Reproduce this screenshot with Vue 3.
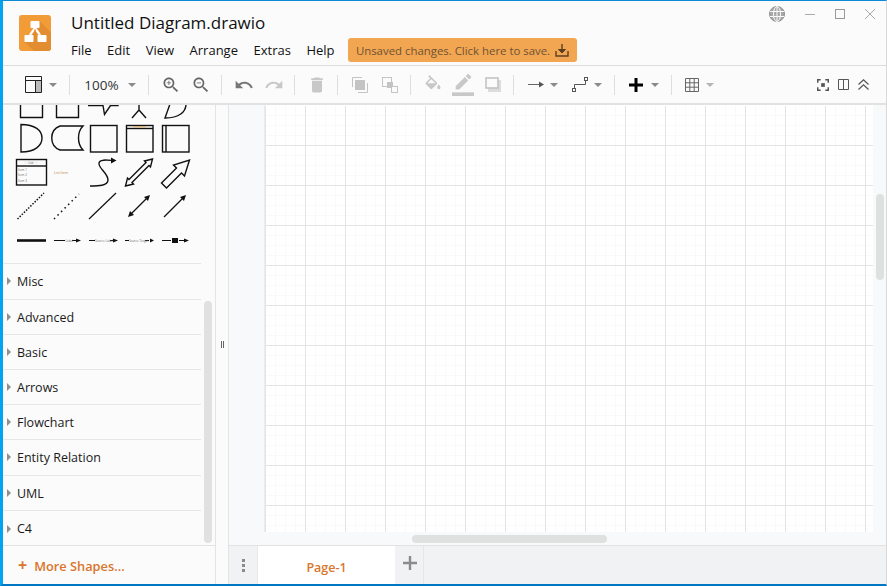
<template>
  <div class="window">
    <header class="head">
      <svg class="logo" width="32" height="36" viewBox="0 0 32 36">
        <rect width="32" height="36" rx="3" fill="#f29c38" />
        <path d="M20.500 6L32 17.500V33a3 3 0 0 1-3 3H15L5.500 27z" fill="#e28d2f" />
        <path d="M16 13l-5 7M16 13l5 7" fill="none" stroke="#fff" stroke-width="2.200" />
        <path d="M16 14.500v5.500" stroke="#e28d2f" stroke-width="1.500" />
        <rect x="11.500" y="6" width="9" height="7" rx=".8" fill="#fff" />
        <rect x="5.500" y="20" width="9" height="7" rx=".8" fill="#fff" />
        <rect x="18.500" y="20" width="9" height="7" rx=".8" fill="#fff" />
      </svg>
      <div class="head-main">
        <div class="title">Untitled Diagram.drawio</div>
        <nav class="menu">
          <span v-for="m in menus" :key="m" class="menu-item">{{ m }}</span>
          <button type="button" class="save">
            <span>Unsaved changes. Click here to save.</span>
            <svg width="14" height="14" viewBox="0 0 14 14" fill="none" stroke="#5b4020" stroke-width="1.400">
              <path d="M1 8v5h12V8M7 1v8" />
              <path d="M3.500 6.500L7 10l3.500-3.500z" fill="#5b4020" stroke-width="1" />
            </svg>
          </button>
        </nav>
      </div>
      <div class="win-controls">
        <svg class="globe" width="18" height="18" viewBox="0 0 18 18" fill="none" stroke="#8f8f8f">
          <circle cx="9" cy="9" r="7.500" fill="#a8a8a8" />
          <ellipse cx="9" cy="9" rx="3.500" ry="7.500" stroke="#fbfbfb" />
          <path d="M9 1.500v15M2 6.500h14M2 11.500h14" stroke="#fbfbfb" />
        </svg>
        <svg width="30" height="18" viewBox="0 0 30 18" stroke="#aaa" fill="none"><path d="M10 9.500h10" /></svg>
        <svg width="30" height="18" viewBox="0 0 30 18" stroke="#999" fill="none"><rect x="10.500" y="4.500" width="9" height="9" /></svg>
        <svg width="30" height="18" viewBox="0 0 30 18" stroke="#aaa" fill="none"><path d="M10 4l10 10M20 4L10 14" /></svg>
      </div>
    </header>

    <div class="toolbar">
      <button type="button" class="tb tb-layout">
        <svg width="18" height="17" viewBox="0 0 18 17">
          <rect x="10" y="4" width="7" height="12" fill="#bbb" />
          <path d="M.5.500h16v16H.5zM.5 4.500h16M10.500 4.500v12" fill="none" stroke="#222" />
        </svg>
        <i class="caret" />
      </button>
      <i class="sep" />
      <button type="button" class="tb tb-zoom"><span>100%</span><i class="caret" /></button>
      <i class="sep" />
      <button type="button" class="tb">
        <svg class="ic" viewBox="0 0 24 24" fill="#666">
          <path d="M15.500 14h-.79l-.28-.27C15.410 12.590 16 11.110 16 9.500 16 5.910 13.090 3 9.500 3S3 5.910 3 9.500 5.910 16 9.500 16c1.610 0 3.090-.59 4.230-1.570l.27.28v.79l5 4.990L20.490 19l-4.990-5zm-6 0C7.010 14 5 11.990 5 9.500S7.010 5 9.500 5 14 7.010 14 9.500 11.990 14 9.500 14z" />
          <path d="M12 10h-2v2H9v-2H7V9h2V7h1v2h2z" />
        </svg>
      </button>
      <button type="button" class="tb">
        <svg class="ic" viewBox="0 0 24 24" fill="#666">
          <path d="M15.500 14h-.79l-.28-.27C15.410 12.590 16 11.110 16 9.500 16 5.910 13.090 3 9.500 3S3 5.910 3 9.500 5.910 16 9.500 16c1.610 0 3.090-.59 4.230-1.570l.27.28v.79l5 4.990L20.490 19l-4.990-5zm-6 0C7.010 14 5 11.990 5 9.500S7.010 5 9.500 5 14 7.010 14 9.500 11.990 14 9.500 14z" />
          <path d="M7 9h5v1H7z" />
        </svg>
      </button>
      <i class="sep" />
      <button type="button" class="tb">
        <svg class="ic" viewBox="0 0 24 24" fill="#777"><path d="M12.500 8c-2.650 0-5.050.99-6.900 2.600L2 7v9h9l-3.620-3.620c1.390-1.160 3.160-1.880 5.120-1.880 3.540 0 6.550 2.310 7.600 5.500l2.370-.78C21.080 11.030 17.150 8 12.500 8z" /></svg>
      </button>
      <button type="button" class="tb">
        <svg class="ic" viewBox="0 0 24 24" fill="#c8c8c8"><path d="M18.400 10.600C16.550 8.990 14.150 8 11.500 8c-4.650 0-8.580 3.030-9.960 7.220L3.900 16c1.050-3.190 4.050-5.500 7.600-5.500 1.950 0 3.730.72 5.120 1.880L13 16h9V7z" /></svg>
      </button>
      <i class="sep" />
      <button type="button" class="tb">
        <svg class="ic" viewBox="0 0 24 24" fill="#c8c8c8"><path d="M6 19c0 1.100.9 2 2 2h8c1.100 0 2-.9 2-2V7H6zM19 4h-3.500l-1-1h-5l-1 1H5v2h14z" /></svg>
      </button>
      <i class="sep" />
      <button type="button" class="tb">
        <svg width="16" height="16" viewBox="0 0 16 16" fill="none" stroke="#c4c4c4">
          <path d="M.5 10V.500H10M15.500 6v9.500H6" />
          <rect x="3" y="3" width="10" height="10" fill="#c4c4c4" stroke="none" />
        </svg>
      </button>
      <button type="button" class="tb">
        <svg width="16" height="16" viewBox="0 0 16 16" fill="none" stroke="#c4c4c4">
          <rect x=".5" y=".5" width="9" height="9" />
          <rect x="5" y="5" width="6" height="6" fill="#c4c4c4" stroke="none" />
          <rect x="9.500" y="9.500" width="6" height="6" fill="#fbfbfb" />
        </svg>
      </button>
      <i class="sep" />
      <button type="button" class="tb">
        <svg class="ic" viewBox="0 0 24 24" fill="#c8c8c8"><path d="M16.560 8.940L7.620 0 6.210 1.410l2.380 2.380-5.150 5.150c-.59.590-.59 1.540 0 2.120l5.500 5.500c.29.290.68.440 1.060.44s.77-.15 1.060-.44l5.500-5.500c.59-.58.59-1.530 0-2.120zM5.210 10L10 5.210 14.790 10H5.210zM19 11.500s-2 2.170-2 3.500c0 1.100.9 2 2 2s2-.9 2-2c0-1.330-2-3.500-2-3.500z" /></svg>
      </button>
      <button type="button" class="tb">
        <svg width="22" height="22" viewBox="0 0 24 24" fill="#c8c8c8">
          <path d="M17.750 7L14 3.250l-10 10V17h3.750zm2.960-2.960c.39-.39.39-1.020 0-1.410L18.370.29c-.39-.39-1.020-.39-1.410 0L15 2.250 18.750 6z" />
          <rect y="20" width="24" height="4" />
        </svg>
      </button>
      <button type="button" class="tb">
        <svg width="16" height="16" viewBox="0 0 16 16" fill="none">
          <rect x="3" y="3" width="13" height="12" fill="#dcdcdc" />
          <rect x="1" y="1" width="12" height="10" fill="#fbfbfb" stroke="#c4c4c4" stroke-width="1.600" />
        </svg>
      </button>
      <i class="sep" />
      <button type="button" class="tb tb-drop">
        <svg width="17" height="9" viewBox="0 0 17 9"><path d="M0 4.500h12" stroke="#666" /><path d="M11 1.500l5 3-5 3z" fill="#555" /></svg>
        <i class="caret" />
      </button>
      <button type="button" class="tb tb-drop">
        <svg width="17" height="15" viewBox="0 0 17 15" fill="none" stroke="#555">
          <path d="M2.500 12V7.500h11V3" />
          <rect x=".5" y="11.500" width="3" height="3" />
          <rect x="12.500" y=".5" width="3" height="3" />
        </svg>
        <i class="caret" />
      </button>
      <i class="sep" />
      <button type="button" class="tb tb-drop tb-plus">
        <svg width="14" height="14" viewBox="0 0 14 14"><path d="M5.500 0h3v5.500H14v3H8.500V14h-3V8.500H0v-3h5.500z" fill="#000" /></svg>
        <i class="caret" />
      </button>
      <i class="sep" />
      <button type="button" class="tb tb-table">
        <svg width="14" height="14" viewBox="0 0 14 14" fill="none" stroke="#666"><path d="M.5.500h13v13H.5zM.5 4.800h13M.5 9.200h13M4.800.500v13M9.200.500v13" /></svg>
        <i class="caret caret-light" />
      </button>
      <div class="tb-right">
        <svg width="12" height="12" viewBox="0 0 13 13" fill="#555">
          <path d="M0 0h4v1.600H1.600V4H0zM9 0h4v4h-1.600V1.600H9zM0 9h1.600v2.400H4V13H0zM11.400 9H13v4H9v-1.600h2.400z" />
          <rect x="4.500" y="4.500" width="4" height="4" />
        </svg>
        <svg width="11" height="11" viewBox="0 0 11 11" fill="none" stroke="#555"><path d="M.5.500h10v10H.5zM5.500.500v10" /></svg>
        <svg width="11" height="11" viewBox="0 0 11 11" fill="none" stroke="#555" stroke-width="1.200"><path d="M.5 5.500L5.500.8l5 4.700M.5 10.500l5-4.700 5 4.700" /></svg>
      </div>
    </div>

    <div class="body">
      <aside class="sidebar">
        <div class="palette">
          <svg class="shapes" width="198" height="158" viewBox="3 105 198 158" fill="none" stroke="#111" stroke-width="1.400">
            <path d="M20.500 104v13.500h22V104M56.500 104v13.500h22V104" />
            <path d="M88 105.500h15l1.500 9 6-9h7.500v-2" />
            <path d="M139 104v6l-7 8M139 110l7 8" />
            <path d="M186 104c0 8-7 14-21 14l5-14" />
            <path d="M21 124.500c14 0 21 6 21 13.500s-7 14-21 14z" />
            <path d="M60 126h23c-6 6-6 18 0 24H60c-11-4-11-20 0-24z" />
            <rect x="90.500" y="125.500" width="26.500" height="26.500" />
            <rect x="126.500" y="125.500" width="26.500" height="26.500" />
            <path d="M126.500 128.500h26.500" />
            <rect x="133" y="126" width="13" height="1.500" fill="#d8b27a" stroke="none" />
            <rect x="162.500" y="125.500" width="26.500" height="26.500" />
            <path d="M166 125.500V152" />

            <rect x="16.500" y="159.500" width="30" height="25.500" />
            <path d="M16.500 166h30" />
            <rect x="24" y="161" width="14" height="3" fill="#f4f4f4" stroke="none" />
            <text class="tiny" x="31" y="164" text-anchor="middle">List</text>
            <text class="tiny" x="18" y="170.500">Item 1</text>
            <text class="tiny" x="18" y="176">Item 2</text>
            <text class="tiny" x="18" y="182">Item 3</text>
            <text class="tiny tiny-orange" x="54" y="174">List Item</text>

            <path d="M90 186c8 0 18 0 18-6 0-7-10-12-9-17 1-4 8-3 13-2.500" />
            <path d="M111 157.500l5.500 3-5.500 3z" fill="#111" stroke="none" />
            <path d="M125.500 186l2-8 1.500 1.500 17-17-1.500-1.500 8-2-2 8-1.500-1.500-17 17 1.500 1.500z" />
            <path d="M161.500 183l15-15-3-3 16-5-5 16-3-3-15 15z" />

            <path d="M17.500 219L44 193" stroke-width="1.500" stroke-dasharray="1.500 1.500" />
            <path d="M54 219l25-25" stroke-width="1.500" stroke-dasharray="1.500 3.500" />
            <path d="M89 219l27-26" stroke-width="1.200" />
            <path d="M131 214l16-16" stroke-width="1.200" />
            <path d="M128 217l2-6 4 4zM150 195l-2 6-4-4z" fill="#111" stroke="none" />
            <path d="M164 217l19-19" stroke-width="1.200" />
            <path d="M186 195l-2 6-4-4z" fill="#111" stroke="none" />

            <path d="M17 240.500h29" stroke-width="2.600" />
            <path d="M54 240.500h11M72 240.500h6" stroke-width="1.200" />
            <text class="tiny" x="65.500" y="241.500">Label</text>
            <path d="M76 238.500l5 2-5 2z" fill="#111" stroke="none" />
            <path d="M89 240.500h6M110 240.500h4" stroke-width="1.200" />
            <text class="tiny" x="95" y="242">Source Label</text>
            <path d="M113 238.500l5 2-5 2z" fill="#111" stroke="none" />
            <path d="M125 240.500h4M145 240.500h4" stroke-width="1.200" />
            <text class="tiny" x="129" y="242">Source Target</text>
            <path d="M150 238.500l4 2-4 2z" fill="#111" stroke="none" />
            <path d="M162 240.500h9M179 240.500h6" stroke-width="1.200" />
            <rect x="172" y="238" width="6" height="5" fill="#111" stroke="none" />
            <path d="M184 238.500l5 2-5 2z" fill="#111" stroke="none" />
          </svg>
          <section v-for="s in sections" :key="s" class="group">
            <i class="tri" />
            <span>{{ s }}</span>
          </section>
          <div class="side-thumb" />
        </div>
        <div class="more">
          <span class="more-plus">+</span>
          <span>More Shapes...</span>
        </div>
      </aside>

      <div class="splitter"><i class="grip" /></div>

      <main class="work">
        <div class="scroller">
          <div class="paper" />
          <div class="thumb-v" />
          <div class="thumb-h" />
        </div>
        <div class="tabs">
          <div class="tab-menu"><i /><i /><i /></div>
          <div class="tab">Page-1</div>
          <div class="tab-add">
            <svg width="14" height="14" viewBox="0 0 14 14"><path d="M5.800 0h2.400v5.800H14v2.400H8.200V14H5.800V8.200H0V5.800h5.800z" fill="#8b8b8b" /></svg>
          </div>
        </div>
      </main>
    </div>
  </div>
</template>

<script setup>
const menus = ['File', 'Edit', 'View', 'Arrange', 'Extras', 'Help']
const sections = ['Misc', 'Advanced', 'Basic', 'Arrows', 'Flowchart', 'Entity Relation', 'UML', 'C4']
</script>

<style>
html, body { margin: 0; background: #fbfbfb; overflow: hidden; }
</style>

<style scoped>
.window {
  width: 887px;
  height: 586px;
  box-sizing: border-box;
  display: flex;
  flex-direction: column;
  position: relative;
  overflow: hidden;
  border-top: 1px solid #0a8ad8;
  border-left: 3px solid #00a4ef;
  border-bottom: 2px solid #0077c2;
  border-right: 1px solid #d8d8d8;
  background: #fbfbfb;
  color: #111;
  font-family: "Open Sans", "Noto Sans", sans-serif;
}

button {
  border: 0;
  padding: 0;
  font: inherit;
  background: none;
}

.head {
  height: 64px;
  flex: none;
  display: flex;
  border-bottom: 1px solid #dcdcdc;
  padding-left: 16px;
}

.logo { margin-top: 14px; flex: none; }

.head-main {
  margin-left: 20px;
  display: flex;
  flex-direction: column;
}

.title {
  margin-top: 9px;
  font-size: 17px;
  line-height: 25px;
}

.menu {
  margin-top: 3px;
  display: flex;
  align-items: center;
  font-size: 13px;
}

.menu-item { margin-right: 15.500px; }

.save {
  height: 24px;
  width: 229px;
  margin-left: -2px;
  display: flex;
  align-items: center;
  justify-content: center;
  gap: 5px;
  border-radius: 3px;
  background: #f2a652;
  color: #6e5232;
  font-size: 11.400px;
}

.win-controls {
  margin-left: auto;
  margin-top: 4px;
  padding-right: 1px;
  display: flex;
  align-items: flex-start;
}

.globe { margin-right: 9px; }

.toolbar {
  flex: none;
  display: flex;
  align-items: center;
  padding-left: 14px;
  border-bottom: 2px solid #e2e2e2;
  box-sizing: border-box;
  height: 39px;
}

.sep {
  width: 1px;
  height: 20px;
  margin: 0 7px 0 5px;
  background: #dedede;
  flex: none;
}

.tb {
  width: 30px;
  height: 30px;
  flex: none;
  display: flex;
  align-items: center;
  justify-content: center;
}

.ic { width: 20px; height: 20px; }

.tb-layout { width: 47px; gap: 6px; }
.tb-zoom { width: 66px; gap: 9px; font-size: 13.500px; color: #333; }
.tb-drop { width: 44px; gap: 5px; }
.tb-plus { gap: 8px; padding-right: 1px; box-sizing: border-box; }
.tb-table { width: 40px; gap: 7px; }

.caret {
  width: 0;
  height: 0;
  border-left: 4px solid transparent;
  border-right: 4px solid transparent;
  border-top: 4px solid #8a8a8a;
  flex: none;
}

.caret-light { border-top-color: #b5b5b5; }

.tb-right {
  margin-left: auto;
  padding-right: 17px;
  display: flex;
  align-items: center;
  gap: 9px;
}

.body {
  flex: 1;
  min-height: 0;
  display: flex;
}

.sidebar {
  width: 212px;
  flex: none;
  display: flex;
  flex-direction: column;
  border-right: 1px solid #e4e4e4;
  box-sizing: content-box;
}

.palette {
  position: relative;
  flex: 1;
  min-height: 0;
  overflow: hidden;
  border-bottom: 1px solid #e2e2e2;
}

.shapes {
  display: block;
  overflow: hidden;
  border-bottom: 1px solid #e6e6e6;
  box-sizing: content-box;
}

.tiny {
  font-size: 3px;
  fill: #666;
  stroke: none;
}

.tiny-orange { font-size: 3.500px; fill: #b9864a; }

.group {
  width: 198px;
  height: 35px;
  box-sizing: border-box;
  display: flex;
  align-items: center;
  padding-left: 4px;
  border-bottom: 1px solid #e6e6e6;
  font-size: 12.500px;
  font-weight: 500;
  color: #1a1a1a;
}

.group:nth-of-type(1),
.group:nth-of-type(6) { height: 36px; padding-bottom: 1px; }
.group:last-of-type { border-bottom: 0; }

.tri {
  width: 0;
  height: 0;
  margin-right: 6px;
  border-top: 4px solid transparent;
  border-bottom: 4px solid transparent;
  border-left: 4px solid #8f8f8f;
  flex: none;
}

.side-thumb {
  position: absolute;
  left: 201px;
  top: 196px;
  width: 8px;
  height: 242px;
  border-radius: 4px;
  background: #e1e1e1;
}

.more {
  height: 38px;
  flex: none;
  display: flex;
  align-items: center;
  padding: 1px 0 0 15px;
  box-sizing: border-box;
  gap: 7px;
  color: #d9762b;
  font-size: 12.800px;
  font-weight: 600;
}

.more-plus { font-size: 16px; line-height: 1; font-weight: 700; margin-top: -2px; }

.splitter {
  width: 12px;
  flex: none;
  display: flex;
  align-items: center;
  justify-content: center;
  border-right: 1px solid #e4e4e4;
}

.grip {
  width: 1px;
  height: 7px;
  border-left: 1px solid #666;
  border-right: 1px solid #666;
}

.work {
  flex: 1;
  min-width: 0;
  display: flex;
  flex-direction: column;
  background: #f8f9fb;
}

.scroller {
  position: relative;
  flex: 1;
  min-height: 0;
  padding: 0 13px 13px 36px;
  display: flex;
  border-bottom: 1px solid #e2e2e2;
}

.paper {
  flex: 1;
  border-top: 1px solid #fff;
  background-color: #fff;
  background-image:
    linear-gradient(#e4e4e4 1px, transparent 1px),
    linear-gradient(90deg, #e4e4e4 1px, transparent 1px),
    linear-gradient(#f9f9f9 1px, transparent 1px),
    linear-gradient(90deg, #f9f9f9 1px, transparent 1px);
  background-size: 40px 40px, 40px 40px, 10px 10px, 10px 10px;
  background-position: 0 -1px;
  box-shadow: -1px 0 0 #ececec;
}

.thumb-v {
  position: absolute;
  right: 2px;
  top: 89px;
  width: 8px;
  height: 86px;
  border-radius: 4px;
  background: #dfe0e0;
}

.thumb-h {
  position: absolute;
  left: 183px;
  bottom: 2px;
  width: 195px;
  height: 8px;
  border-radius: 4px;
  background: #dfe0e0;
}

.tabs {
  height: 38px;
  flex: none;
  display: flex;
  background: #f1f2f4;
}

.tab-menu {
  width: 29px;
  display: flex;
  flex-direction: column;
  align-items: center;
  justify-content: center;
  gap: 2px;
  border-right: 1px solid #e8e8e8;
  box-sizing: border-box;
}

.tab-menu i {
  width: 3px;
  height: 3px;
  background: #8b8b8b;
}

.tab {
  width: 137px;
  display: flex;
  align-items: center;
  justify-content: center;
  padding-top: 4px;
  box-sizing: border-box;
  background: #fff;
  color: #d9762b;
  font-size: 12.500px;
  font-weight: 600;
}

.tab-add {
  width: 29px;
  display: flex;
  align-items: center;
  justify-content: center;
  padding: 0 0 5px 1px;
  box-sizing: border-box;
  border-right: 1px solid #e6e6e6;
}
</style>
